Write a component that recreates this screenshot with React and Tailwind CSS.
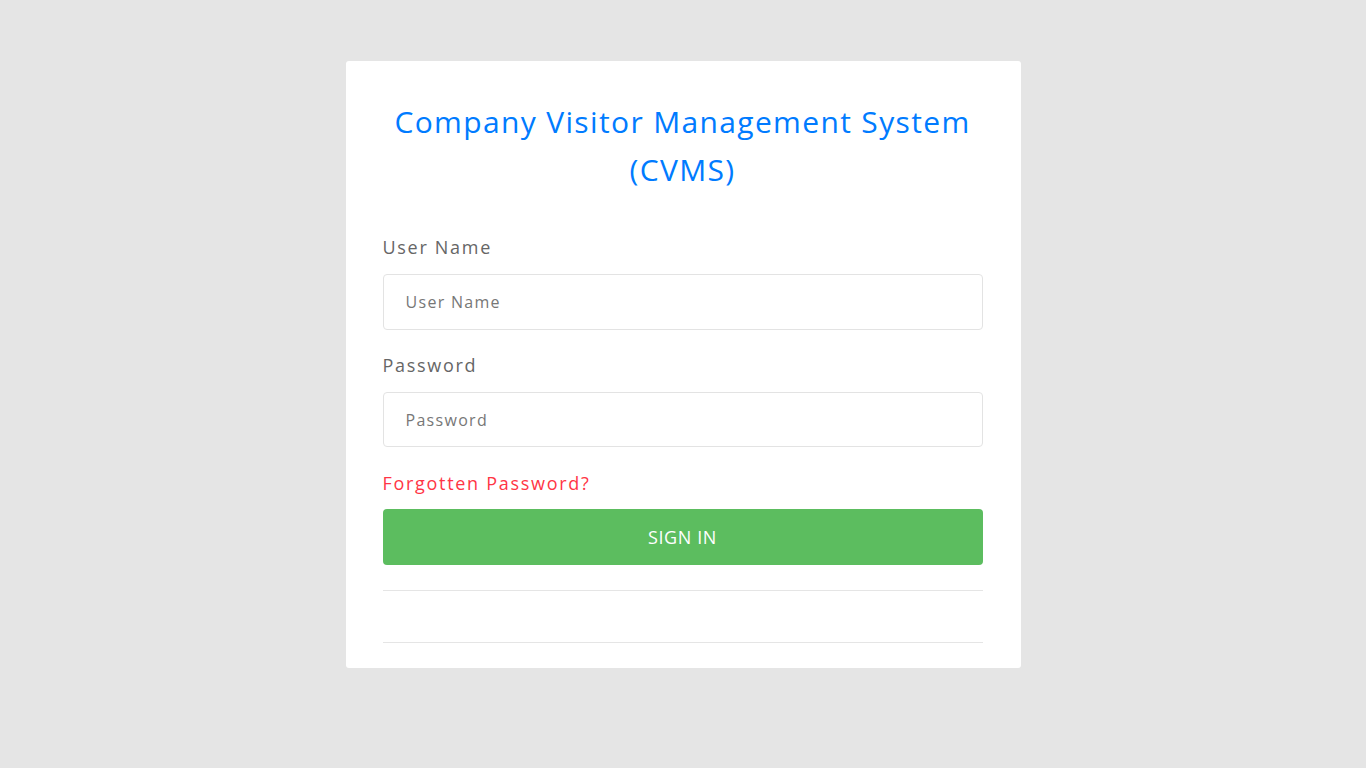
export default function App() {
  return (
    <div
      className="min-h-screen w-full bg-[#e5e5e5] flex justify-center"
      style={{ fontFamily: "'Open Sans', 'Liberation Sans', sans-serif" }}
    >
      <div className="mt-[61px] mb-[100px] h-[607px] w-[675px] bg-white rounded-[3px] pl-[37px] pr-[38px] pt-[37px]">
        <h1 className="text-center text-[30px] leading-[48px] tracking-[1.35px] text-[#007bff] font-normal">
          Company Visitor Management System
          <br />
          (CVMS)
        </h1>

        <form className="mt-[40px]" onSubmit={(e) => e.preventDefault()}>
          <label className="block text-[18px] leading-[27px] tracking-[1.7px] text-[#666666]">User Name</label>
          <input
            type="text"
            placeholder="User Name"
            className="mt-[13px] block w-full h-[56px] px-[22px] border border-[#e3e3e3] rounded-[4px] text-[16px] tracking-[1.3px] text-[#555] placeholder:text-[#777777] outline-none"
          />

          <label className="mt-[22px] block text-[18px] leading-[27px] tracking-[1.7px] text-[#666666]">Password</label>
          <input
            type="password"
            placeholder="Password"
            className="mt-[13px] block w-full h-[55px] px-[22px] border border-[#e3e3e3] rounded-[4px] text-[16px] tracking-[1.3px] text-[#555] placeholder:text-[#777777] outline-none"
          />

          <a href="#" className="mt-[23px] block text-[18px] leading-[27px] tracking-[1.7px] text-[#ff3545]">
            Forgotten Password?
          </a>

          <button
            type="submit"
            className="mt-[12px] block w-full h-[56px] rounded-[4px] bg-[#5cbd5f] text-white text-[18px] tracking-[0.6px] uppercase"
          >
            Sign In
          </button>

          <hr className="mt-[25px] border-t border-[#e5e5e5]" />
          <hr className="mt-[51px] border-t border-[#e5e5e5]" />
        </form>
      </div>
    </div>
  );
}
